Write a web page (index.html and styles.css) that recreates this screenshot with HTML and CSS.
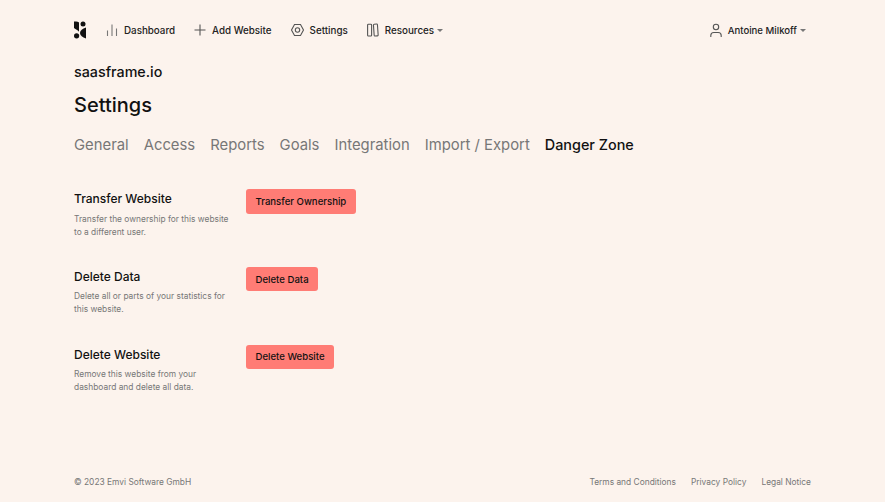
FILE: index.html
```html
<!DOCTYPE html>
<html lang="en">
<head>
<meta charset="utf-8">
<title>Settings</title>
<link rel="stylesheet" href="styles.css">
</head>
<body>
<div class="page">
  <header class="nav">
    <div class="nav-left">
      <svg class="logo" width="12" height="18" viewBox="0 0 12 18"><path d="M0 .5c3 0 5 .5 5 1v9.500C5 10 1.500 8 0 7z" fill="#111"/><circle cx="9" cy="2.900" r="2.500" fill="#111"/><path d="M12 6.500v11C8.500 16.500 6 14.500 6 12S8.500 7.500 12 6.500z" fill="#111"/><circle cx="2.600" cy="14.800" r="2.600" fill="#111"/></svg>
      <a class="nav-item">
        <svg class="ico" width="12" height="14" viewBox="0 0 12 14"><path d="M1.500 7.500V13M6 1.500V13M10.500 5.500V13" stroke="#777" stroke-width="1.100" fill="none"/></svg>
        Dashboard</a>
      <a class="nav-item">
        <svg class="ico" width="12" height="14" viewBox="0 0 12 14"><path d="M6 1.500v11M.5 7h11" stroke="#555" stroke-width="1.100" fill="none"/></svg>
        Add Website</a>
      <a class="nav-item">
        <svg class="ico" width="13" height="14" viewBox="0 0 13 14"><path d="M3.500 1.500h6L12.500 7l-3 5.500h-6L.5 7z" stroke="#555" stroke-width="1.100" fill="none"/><circle cx="6.500" cy="7" r="2.200" stroke="#555" stroke-width="1.100" fill="none"/></svg>
        Settings</a>
      <a class="nav-item">
        <svg class="ico" width="12" height="14" viewBox="0 0 12 14"><rect x=".6" y="1.200" width="4" height="11.800" rx=".8" stroke="#555" stroke-width="1.100" fill="none"/><rect x="6.800" y="1.200" width="4" height="11.800" rx=".8" transform="rotate(-4 8 7)" stroke="#555" stroke-width="1.100" fill="none"/></svg>
        Resources<span class="caret"></span></a>
    </div>
    <a class="nav-item user">
      <svg class="ico" width="12" height="15" viewBox="0 0 12 15"><circle cx="6" cy="4" r="2.700" stroke="#555" stroke-width="1.100" fill="none"/><path d="M.8 14v-1.500c0-2 1.500-3 3-3h4.400c1.500 0 3 1 3 3V14" stroke="#555" stroke-width="1.100" fill="none"/></svg>
      Antoine Milkoff<span class="caret"></span></a>
  </header>

  <div class="domain">saasframe.io</div>
  <h1 class="title">Settings</h1>
  <nav class="tabs">
    <a class="tab">General</a>
    <a class="tab">Access</a>
    <a class="tab">Reports</a>
    <a class="tab">Goals</a>
    <a class="tab">Integration</a>
    <a class="tab">Import / Export</a>
    <a class="tab active">Danger Zone</a>
  </nav>

  <main class="sections">
    <section class="row">
      <div class="info">
        <h2 class="row-title">Transfer Website</h2>
        <p class="row-text">Transfer the ownership for this website to a different user.</p>
      </div>
      <button class="btn">Transfer Ownership</button>
    </section>
    <section class="row">
      <div class="info">
        <h2 class="row-title">Delete Data</h2>
        <p class="row-text">Delete all or parts of your statistics for this website.</p>
      </div>
      <button class="btn">Delete Data</button>
    </section>
    <section class="row">
      <div class="info">
        <h2 class="row-title">Delete Website</h2>
        <p class="row-text">Remove this website from your dashboard and delete all data.</p>
      </div>
      <button class="btn">Delete Website</button>
    </section>
  </main>

  <footer class="footer">
    <span>© 2023 Emvi Software GmbH</span>
    <div class="footer-links">
      <a>Terms and Conditions</a>
      <a>Privacy Policy</a>
      <a>Legal Notice</a>
    </div>
  </footer>
</div>
</body>
</html>
```
FILE: styles.css
```css
* { box-sizing: border-box; }
html, body { margin: 0; height: 100%; }
body {
  background: #fcf3ed;
  color: #111;
  font-family: "Inter", "Liberation Sans", sans-serif;
  overflow: hidden;
}
.page {
  width: 737px;
  height: 502px;
  margin: 0 auto;
  display: flex;
  flex-direction: column;
}
.nav {
  height: 60px;
  display: flex;
  align-items: center;
  justify-content: space-between;
}
.nav-left { display: flex; align-items: center; }
.logo { margin-right: 20px; }
.nav-item {
  display: flex;
  align-items: center;
  font-size: 9.800px;
  font-weight: 500;
  color: #222;
  margin-right: 19px;
}
.user { margin-right: 5px; font-size: 9.600px; }
.nav-item .ico { margin-right: 6px; }
.caret {
  width: 0;
  height: 0;
  margin-left: 3px;
  border-left: 3px solid transparent;
  border-right: 3px solid transparent;
  border-top: 3.500px solid #777;
}
.domain {
  font-size: 14.300px;
  font-weight: 500;
  line-height: 24px;
}
.title {
  margin: 7px 0 0;
  font-size: 20px;
  font-weight: 500;
  line-height: 28px;
}
.tabs {
  display: flex;
  gap: 15px;
  margin-top: 14px;
  font-size: 14.850px;
  line-height: 24px;
  color: #777;
}
.tab.active { color: #111; font-weight: 500; font-size: 14.400px; }
.sections {
  margin-top: 32.200px;
  display: flex;
  flex-direction: column;
  gap: 22.700px;
}
.row { display: flex; align-items: flex-start; height: 55px; }
.info { width: 172px; }
.row-title {
  margin: 0;
  font-size: 12px;
  font-weight: 500;
  line-height: 20px;
}
.row-text {
  margin: 3.500px 0 0;
  font-size: 8.400px;
  line-height: 13px;
  color: #777;
  width: 158px;
}
.btn {
  height: 24.500px;
  padding: 0 9.500px;
  border: 0;
  border-radius: 3px;
  background: #ff7c75;
  color: #111;
  font: 500 9.600px "Inter", "Liberation Sans", sans-serif;
}
.footer {
  margin-top: auto;
  height: 25px;
  display: flex;
  justify-content: space-between;
  font-size: 8.400px;
  color: #777;
}
.footer-links { display: flex; gap: 15px; }
```
